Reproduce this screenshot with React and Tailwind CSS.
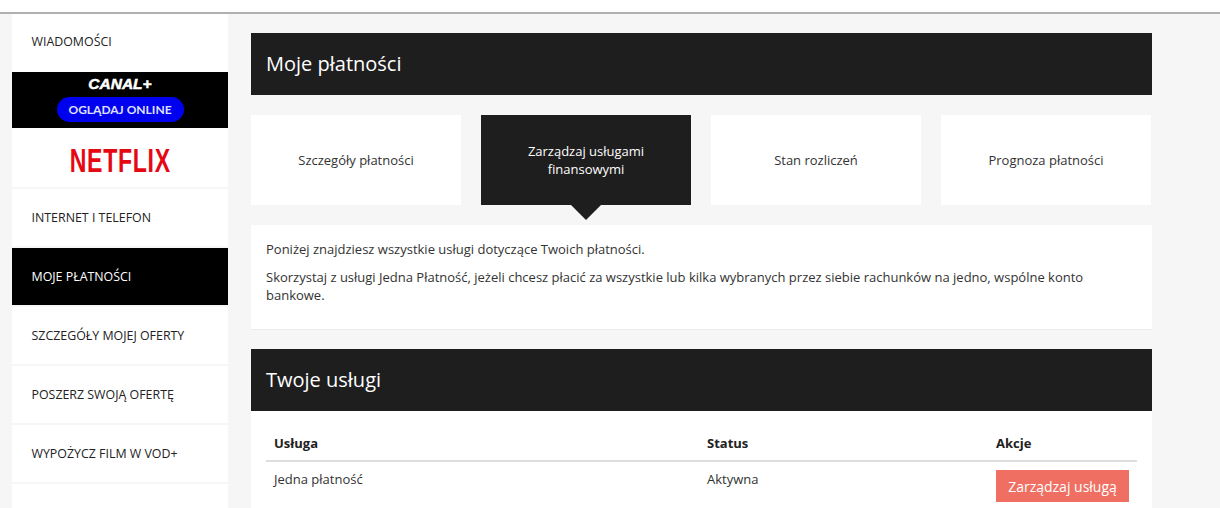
const side = [
  { t: "INTERNET I TELEFON" },
  { t: "MOJE PŁATNOŚCI", active: true },
  { t: "SZCZEGÓŁY MOJEJ OFERTY" },
  { t: "POSZERZ SWOJĄ OFERTĘ" },
  { t: "WYPOŻYCZ FILM W VOD+" },
];

function Tab({ children, active }) {
  return (
    <div className={"relative w-[210px] h-[90px] flex items-center justify-center text-center text-[13px] leading-[18px] px-8 " + (active ? "bg-[#1e1e1e] text-white" : "bg-white text-[#333]")}>
      {children}
      {active && <div className="absolute left-1/2 -translate-x-1/2 top-full w-0 h-0 border-l-[15px] border-r-[15px] border-t-[15px] border-l-transparent border-r-transparent border-t-[#1e1e1e]" />}
    </div>
  );
}

export default function App() {
  return (
    <div className="h-[508px] w-[1220px] overflow-hidden bg-[#f6f6f6] font-['Open_Sans',sans-serif] text-[#333]">
      <div className="h-[14px] bg-white border-b-2 border-[#b0b0b0]" />
      <div className="flex">
        <aside className="ml-3 w-[216px] shrink-0">
          <div className="h-[58px] pb-[2px] bg-white flex items-center pl-[19.5px] text-[12.4px] text-[#222]">WIADOMOŚCI</div>
          <div className="h-[56px] bg-black flex flex-col items-center">
            <div className="text-white font-['Liberation_Sans',sans-serif] font-bold italic text-[15.5px] leading-[15px] mt-[4px] [-webkit-text-stroke:0.5px_white]">CANAL+</div>
            <div className="mt-[6px] w-[127px] h-[25px] rounded-full bg-[#0000f0] text-[#dfe0ff] font-['Lato',sans-serif] font-bold text-[12px] flex items-center justify-center">OGLĄDAJ ONLINE</div>
          </div>
          <div className="h-[59px] pt-[6px] bg-white flex items-center justify-center overflow-hidden mb-[2px]">
            <span className="text-[#e50914] font-['Liberation_Sans',sans-serif] font-bold text-[33px] leading-none scale-x-[0.7] tracking-[1px]">NETFLIX</span>
          </div>
          {side.map((s) => (
            <div key={s.t} className={"h-[57px] mb-[2px] pt-[2px] flex items-center pl-[19.5px] text-[12.4px] " + (s.active ? "bg-black text-white" : "bg-white text-[#222]")}>{s.t}</div>
          ))}
          <div className="h-[60px] bg-white" />
        </aside>
        <main className="ml-[23px] w-[901px] shrink-0 pt-[19px]">
          <div className="h-[62px] bg-[#1e1e1e] text-white text-[20px] flex items-center pl-[15px]">Moje płatności</div>
          <div className="mt-5 flex gap-5">
            <Tab>Szczegóły płatności</Tab>
            <Tab active>Zarządzaj usługami finansowymi</Tab>
            <Tab>Stan rozliczeń</Tab>
            <Tab>Prognoza płatności</Tab>
          </div>
          <div className="mt-5 h-[105px] bg-white border-b border-[#ebebeb] px-[15px] pt-[15px] text-[13px] leading-[18px] w-[901px]">
            <p>Poniżej znajdziesz wszystkie usługi dotyczące Twoich płatności.</p>
            <p className="mt-[10px]">Skorzystaj z usługi Jedna Płatność, jeżeli chcesz płacić za wszystkie lub kilka wybranych przez siebie rachunków na jedno, wspólne konto bankowe.</p>
          </div>
          <div className="mt-[19px] h-[62px] bg-[#1e1e1e] text-white text-[20px] flex items-center pl-[15px]">Twoje usługi</div>
          <div className="bg-white px-[15px] h-[100px]">
            <div className="flex h-[51px] items-end pb-[7px] border-b-2 border-[#ddd] text-[13px] font-bold text-[#222] pl-2">
              <div className="w-[433px]">Usługa</div>
              <div className="w-[289px]">Status</div>
              <div>Akcje</div>
            </div>
            <div className="flex pl-2 text-[13px] pt-[8px]">
              <div className="w-[433px]">Jedna płatność</div>
              <div className="w-[289px]">Aktywna</div>
              <div className="w-[133px] h-[32px] bg-[#ef6f63] text-white text-[14px] flex items-center justify-center">Zarządzaj usługą</div>
            </div>
          </div>
        </main>
      </div>
    </div>
  );
}
